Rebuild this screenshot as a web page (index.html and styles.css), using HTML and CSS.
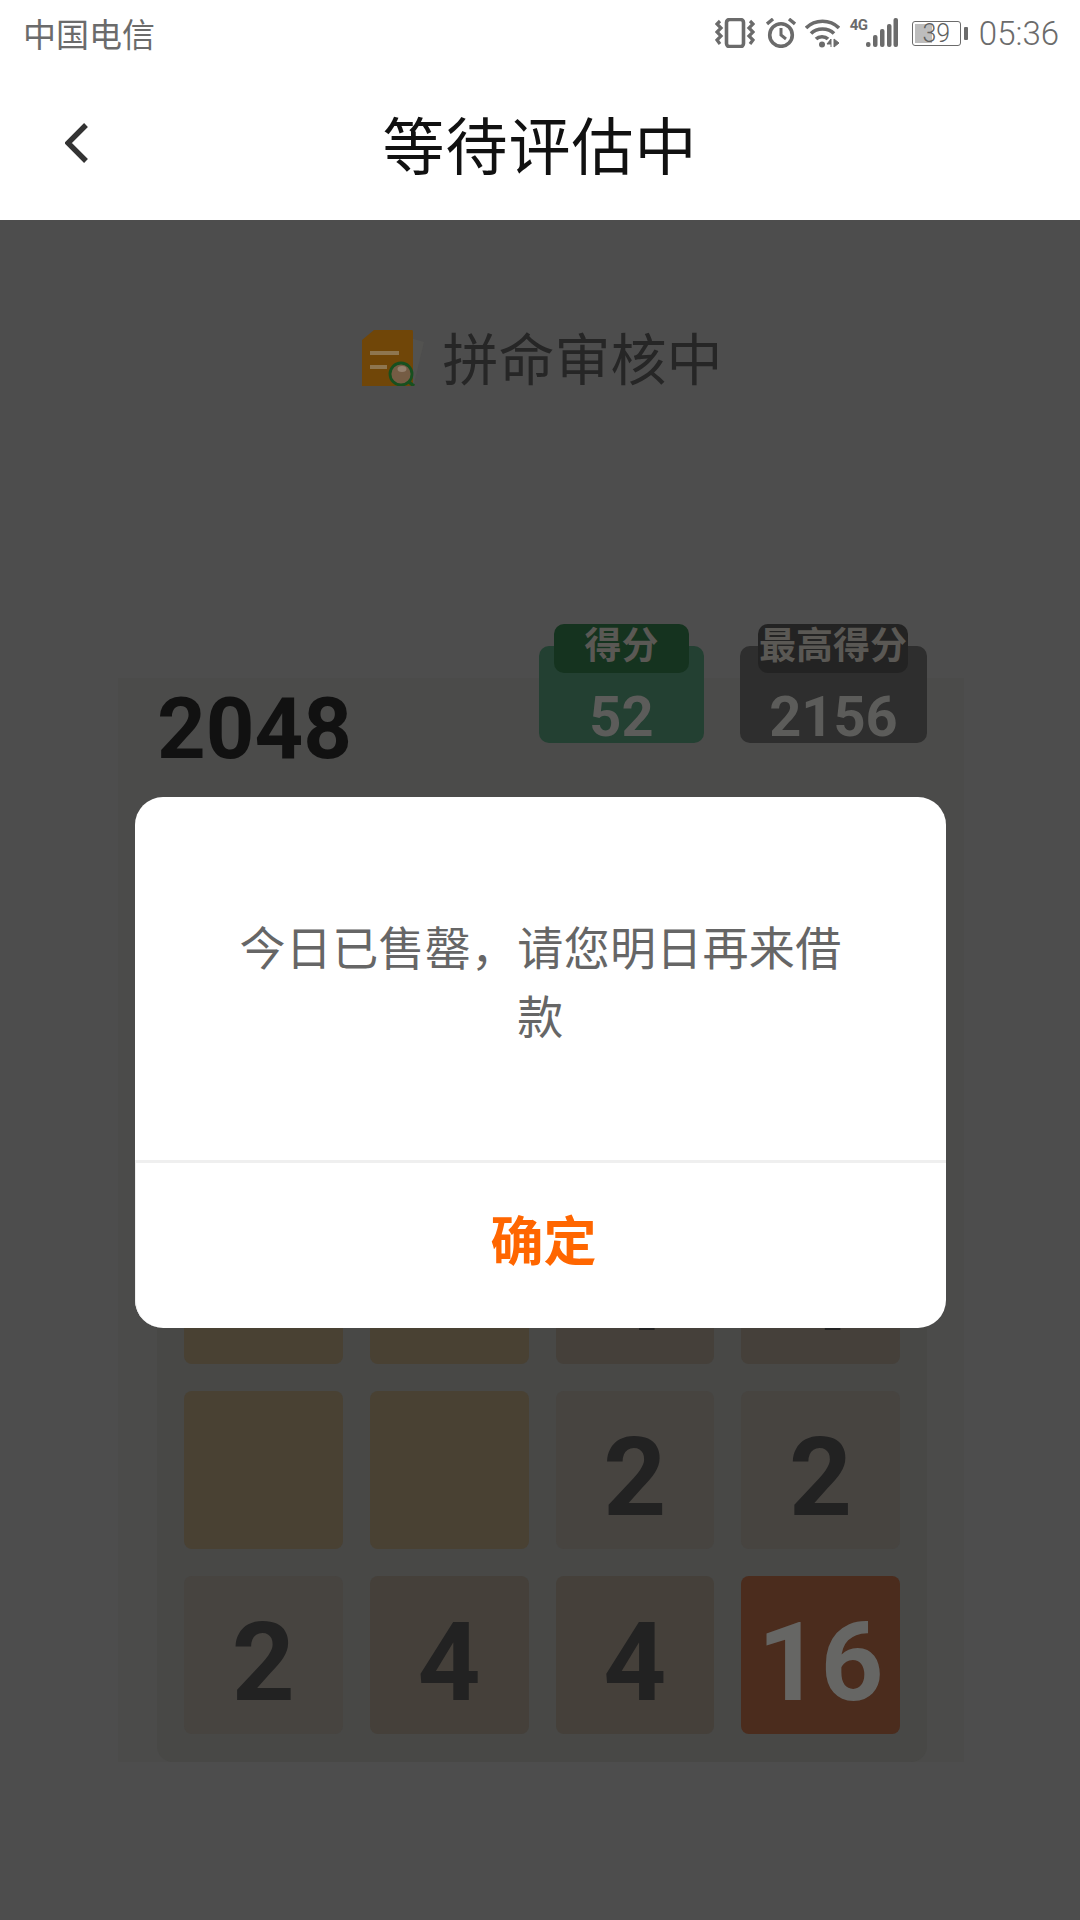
FILE: index.html
```html
<!DOCTYPE html>
<html lang="zh">
<head>
<meta charset="utf-8">
<title>等待评估中</title>
<link rel="stylesheet" href="styles.css">
</head>
<body>
<div class="screen">
  <div class="status">
    <span class="carrier">中国电信</span>
    <div class="status-icons">
      <svg class="i-vib" viewBox="0 0 40 30"><rect x="11.5" y="1.5" width="17" height="27" rx="3" fill="none" stroke="#6b6b6b" stroke-width="3.6"/><path d="M5 3 L2 6 L6 10 L2 14 L6 18 L2 22 L5 26 M35 3 L38 6 L34 10 L38 14 L34 18 L38 22 L35 26" fill="none" stroke="#6b6b6b" stroke-width="3.2"/></svg>
      <svg class="i-alarm" viewBox="0 0 30 30"><circle cx="15" cy="17" r="11.3" fill="none" stroke="#6b6b6b" stroke-width="3.6"/><path d="M15 10 V17 L20 21" fill="none" stroke="#6b6b6b" stroke-width="3"/><path d="M1 6 L7 1 M29 6 L23 1" stroke="#6b6b6b" stroke-width="3.4"/></svg>
      <svg class="i-wifi" viewBox="0 0 35 30"><path d="M1 10 C10 1 25 1 34 10 M6 15.500 C12 9.500 23 9.500 29 15.500 M11 21 C14 18 20 18 23 21" fill="none" stroke="#6b6b6b" stroke-width="3.6"/><circle cx="17" cy="26.500" r="3" fill="#6b6b6b"/><path d="M26 29 V21 L22 26 H26 M29 21 L34 25 L29 29 Z" fill="#6b6b6b" stroke="#6b6b6b"/></svg>
      <div class="signal">
        <span class="net">4G</span>
        <svg class="i-signal" viewBox="0 0 32 30"><rect x="0" y="24" width="4.500" height="5" rx="2" fill="#6b6b6b"/><rect x="7" y="17" width="4.500" height="12" rx="2" fill="#6b6b6b"/><rect x="14" y="11" width="4.500" height="18" rx="2" fill="#6b6b6b"/><rect x="21" y="6" width="4.500" height="23" rx="2" fill="#6b6b6b"/><rect x="27.500" y="0" width="4.500" height="29" rx="2" fill="#6b6b6b"/></svg>
      </div>
      <div class="battery">
        <div class="battery-body"><div class="battery-fill"></div><span class="battery-level">39</span></div>
        <div class="battery-cap"></div>
      </div>
      <span class="clock">05:36</span>
    </div>
  </div>

  <header class="topbar">
    <svg class="back" viewBox="0 0 24 40"><path d="M21 2 L3 20 L21 38" fill="none" stroke="#333" stroke-width="5.400"/></svg>
    <h1 class="title">等待评估中</h1>
  </header>

  <main class="content">
    <div class="review">
      <svg class="doc" viewBox="0 0 62 56">
        <path d="M48 8 L62 12 L52 54 L44 54 Z" fill="#525250"/>
        <path d="M12 0 H50 Q51 0 51 2 V56 H0 V10 Z" fill="#704608"/>
        <rect x="8" y="21" width="29" height="4" fill="#8e7650"/>
        <rect x="8" y="35" width="17" height="4" fill="#8e7650"/>
        <circle cx="39" cy="44" r="11" fill="#755c44" stroke="#17501f" stroke-width="2.800"/>
        <ellipse cx="40" cy="39" rx="4.500" ry="3" fill="#94806e"/>
        <path d="M47 52 L52 56" stroke="#17501f" stroke-width="3.400"/>
      </svg>
      <span class="review-text">拼命审核中</span>
    </div>

    <section class="panel">
      <div class="panel-head">
        <div class="logo">2048</div>
        <div class="scores">
          <div class="score score-now">
            <div class="score-label">得分</div>
            <div class="score-value">52</div>
          </div>
          <div class="score score-best">
            <div class="score-label">最高得分</div>
            <div class="score-value">2156</div>
          </div>
        </div>
      </div>
      <div class="board">
        <div class="tile"></div><div class="tile"></div><div class="tile"></div><div class="tile"></div>
        <div class="tile"></div><div class="tile"></div><div class="tile t4">4</div><div class="tile t4">4</div>
        <div class="tile"></div><div class="tile"></div><div class="tile t2">2</div><div class="tile t2">2</div>
        <div class="tile t2">2</div><div class="tile t4">4</div><div class="tile t4">4</div><div class="tile t16">16</div>
      </div>
    </section>
  </main>

  <div class="dialog">
    <div class="dialog-body">今日已售罄，请您明日再来借款</div>
    <div class="dialog-action">确定</div>
  </div>
</div>
</body>
</html>
```

FILE: styles.css
```css
* { box-sizing: border-box; }
html, body { margin: 0; padding: 0; }
body {
  background: #fff;
  font-family: "Noto Sans CJK SC", "Roboto", sans-serif;
}
.screen {
  position: relative;
  width: 1080px;
  height: 1920px;
  overflow: hidden;
  display: flex;
  flex-direction: column;
}

/* status bar */
.status {
  height: 66px;
  flex: none;
  display: flex;
  justify-content: space-between;
  align-items: center;
  padding: 0 21px 0 23px;
  color: #6b6b6b;
}
.carrier { font-size: 33px; line-height: 1; }
.status-icons { display: flex; align-items: center; }
.i-vib { width: 40px; height: 30px; margin-right: 11px; }
.i-alarm { width: 30px; height: 30px; margin-right: 9px; }
.i-wifi { width: 35px; height: 30px; margin-right: 10px; }
.signal { display: flex; align-items: flex-start; height: 30px; margin-right: 14px; }
.net {
  width: 16px;
  font: 700 15px/14px "Roboto", sans-serif;
  letter-spacing: -0.8px;
  color: #6b6b6b;
}
.i-signal { width: 32px; height: 30px; }
.battery { display: flex; align-items: center; margin-right: 11px; }
.battery-body {
  position: relative;
  width: 49px;
  height: 25px;
  border: 1.5px solid #6b6b6b;
  border-radius: 3px;
  display: flex;
  align-items: center;
  justify-content: center;
}
.battery-fill {
  position: absolute;
  left: 2px; top: 2px; bottom: 2px;
  width: 17px;
  background: #bdbdbd;
}
.battery-level {
  position: relative;
  font: 300 25px/1 "Roboto", sans-serif;
  color: #5f5f5f;
}
.battery-cap { width: 4px; height: 13px; margin-left: 3px; background: #6b6b6b; border-radius: 1px; }
.clock { font: 300 33px/1 "Roboto", sans-serif; color: #6b6b6b; }

/* top bar */
.topbar {
  position: relative;
  height: 154px;
  flex: none;
  display: flex;
  align-items: center;
  justify-content: center;
}
.back {
  position: absolute;
  left: 65px;
  top: 57px;
  width: 24px;
  height: 40px;
}
.title {
  margin: 0;
  font-size: 62px;
  font-weight: 400;
  line-height: 1;
  letter-spacing: 1px;
  color: #111;
}

/* dimmed page */
.content {
  flex: 1;
  background: #4d4d4d;
  display: flex;
  flex-direction: column;
  align-items: flex-start;
}
.review {
  align-self: center;
  display: flex;
  align-items: center;
  height: 56px;
  margin-top: 110px;
  margin-left: 4px;
}
.doc { width: 62px; height: 56px; margin-right: 19px; }
.review-text { font-size: 56px; line-height: 1; color: #262626; margin-top: -4px; }

.panel {
  width: 846px;
  margin: 292px 0 0 118px;
  height: 1084px;
  background: #4b4b4a;
  padding: 0 37px 0 39px;
}
.panel-head {
  height: 371px;
  margin-top: -54px;
  position: relative;
  display: flex;
  justify-content: space-between;
  align-items: flex-start;
}
.logo {
  margin-top: 63px;
  font: 700 85px/1 "Roboto", sans-serif;
  color: #111;
}
.scores { display: flex; gap: 36px; margin-top: 22px; }
.score {
  position: relative;
  height: 97px;
  border-radius: 10px;
  display: flex;
  justify-content: center;
  align-items: flex-end;
}
.score-now { width: 165px; background: #234032; }
.score-best { width: 187px; background: #2e2e2e; }
.score-label {
  position: absolute;
  top: -22px;
  left: 15px;
  right: 15px;
  height: 49px;
  border-radius: 10px;
  font-size: 37px;
  font-weight: 700;
  line-height: 39px;
  text-align: center;
  white-space: nowrap;
  color: #5a5854;
}
.score-now .score-label { background: #15331f; }
.score-best .score-label { left: 18px; right: 19px; background: #232323; }
.score-value {
  font: 700 56px/1 "Roboto", sans-serif;
  color: #5c5c5a;
  position: relative;
  top: 2px;
}

/* board */
.board {
  height: 767px;
  margin-top: 0;
  padding: 26px 27px 27px;
  background: #484846;
  border-radius: 16px;
  display: grid;
  grid-template-columns: repeat(4, 1fr);
  grid-template-rows: repeat(4, 158px);
  gap: 27px;
}
.tile {
  background: #494133;
  border-radius: 8px;
  display: flex;
  align-items: center;
  justify-content: center;
  padding-top: 16px;
  font: 700 110px/1 "Roboto", sans-serif;
  color: #222;
}
.t2 { background: #474440; }
.t4 { background: #45403a; }
.t16 { background: #4b2c1d; color: #666664; }

/* dialog */
.dialog {
  position: absolute;
  left: 135px;
  top: 797px;
  width: 811px;
  height: 531px;
  background: #fff;
  border-radius: 28px;
  display: flex;
  flex-direction: column;
}
.dialog-body {
  height: 366px;
  padding: 114px 84px 0;
  border-bottom: 3px solid #efefef;
  font-size: 46px;
  letter-spacing: 0.3px;
  line-height: 69px;
  text-align: center;
  color: #666;
}
.dialog-action {
  flex: 1;
  display: flex;
  align-items: center;
  justify-content: center;
  padding: 0 0 14px 5px;
  border-left: 1px solid #eee;
  border-bottom-left-radius: 28px;
  font-size: 53px;
  font-weight: 700;
  line-height: 1;
  color: #ff6600;
}
```
